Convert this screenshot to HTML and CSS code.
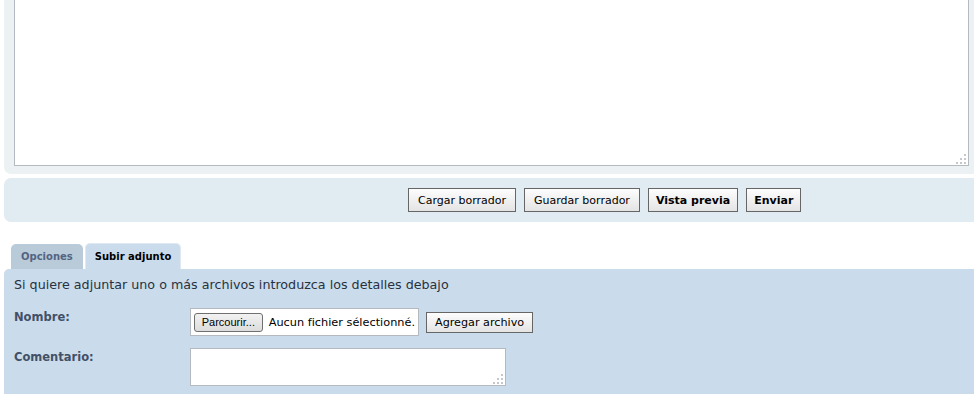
FILE: index.html
```html
<!DOCTYPE html>
<html lang="es">
<head>
    <meta charset="UTF-8">
    <meta name="viewport" content="width=device-width, initial-scale=1.0">
    <title>Publicar mensaje</title>
    <link rel="stylesheet" href="styles.css">
</head>
<body>
    <div class="page">
        <!-- Message editor -->
        <div class="panel editor">
            <div class="area-wrap">
                <textarea class="message" name="message"></textarea>
                <span class="grip">
                    <svg width="11" height="11" viewBox="0 0 11 11"><g fill="#c4c8cc"><rect x="8" y="0" width="2" height="2"/><rect x="4" y="4" width="2" height="2"/><rect x="8" y="4" width="2" height="2"/><rect x="0" y="8" width="2" height="2"/><rect x="4" y="8" width="2" height="2"/><rect x="8" y="8" width="2" height="2"/></g></svg>
                </span>
            </div>
        </div>

        <!-- Submit buttons -->
        <div class="panel actions">
            <button class="btn">Cargar borrador</button>
            <button class="btn">Guardar borrador</button>
            <button class="btn strong">Vista previa</button>
            <button class="btn strong">Enviar</button>
        </div>

        <!-- Options / attachments tabs -->
        <ul class="tabs">
            <li class="tab"><a href="#options">Opciones</a></li>
            <li class="tab active"><a href="#attach">Subir adjunto</a></li>
        </ul>
        <div class="panel attach">
            <p class="intro">Si quiere adjuntar uno o más archivos introduzca los detalles debajo</p>
            <dl class="row">
                <dt>Nombre:</dt>
                <dd class="file-row">
                    <div class="filebox">
                        <span class="browse">Parcourir...</span>
                        <span class="file-name">Aucun fichier sélectionné.</span>
                    </div>
                    <button class="btn add">Agregar archivo</button>
                </dd>
            </dl>
            <dl class="row">
                <dt>Comentario:</dt>
                <dd>
                    <div class="area-wrap">
                        <textarea class="comment" name="filecomment"></textarea>
                        <span class="grip">
                            <svg width="11" height="11" viewBox="0 0 11 11"><g fill="#c4c8cc"><rect x="8" y="0" width="2" height="2"/><rect x="4" y="4" width="2" height="2"/><rect x="8" y="4" width="2" height="2"/><rect x="0" y="8" width="2" height="2"/><rect x="4" y="8" width="2" height="2"/><rect x="8" y="8" width="2" height="2"/></g></svg>
                        </span>
                    </div>
                </dd>
            </dl>
        </div>
    </div>
</body>
</html>
```

FILE: styles.css
```css
html {
    overflow: hidden;
}

body {
    margin: 0;
    padding: 0;
    background-color: #fff;
    font-family: "DejaVu Sans", Verdana, sans-serif;
    font-size: 11px;
    color: #28313f;
}

.page {
    margin-left: 4px;
    width: 975px;
}

.panel {
    border-radius: 7px;
}

.editor {
    background-color: #ecf1f3;
    margin-top: -20px;
    padding: 0 10px 8px;
    border-radius: 0 0 7px 7px;
}

.area-wrap {
    position: relative;
}

textarea {
    display: block;
    box-sizing: border-box;
    border: 1px solid #b4bac0;
    background-color: #fff;
    resize: none;
    margin: 0;
    padding: 3px;
    font-family: inherit;
}

.message {
    width: 955px;
    height: 186px;
}

.grip {
    position: absolute;
    right: 3px;
    bottom: 2px;
    width: 10px;
    height: 10px;
    line-height: 0;
}

.actions {
    background-color: #e1ebf2;
    margin-top: 4px;
    height: 24px;
    padding: 10px 0 10px 404px;
    display: flex;
    gap: 8px;
}

.btn {
    height: 24px;
    padding: 1px 9px 0;
    border: 1px solid #666;
    background: linear-gradient(#fdfdfd, #e4e4e4);
    font-family: inherit;
    font-size: 11px;
    color: #000;
    cursor: pointer;
}

.btn.strong {
    padding: 1px 7px 0;
    font-weight: bold;
}

.tabs {
    list-style: none;
    margin: 21px 0 0;
    padding: 0 0 0 7px;
    display: flex;
    align-items: flex-end;
    gap: 2px;
}

.tab a {
    display: block;
    height: 25px;
    line-height: 25px;
    padding: 0 10px;
    background-color: #b9cad9;
    border-radius: 5px 5px 0 0;
    font-size: 10px;
    font-weight: bold;
    color: #536482;
    text-decoration: none;
}

.tab.active a {
    height: 25px;
    line-height: 25px;
    padding: 0 9px;
    background-color: #cadceb;
    border: 1px solid #e0e9f1;
    border-bottom: none;
    color: #000;
}

.attach {
    background-color: #cadceb;
    border-radius: 5px 0 0 0;
    padding: 7px 10px 8px;
}

.intro {
    margin: 0;
    line-height: 17px;
    font-size: 12.7px;
}

.row {
    display: flex;
    margin: 15px 0 0;
}

.row + .row {
    margin-top: 12px;
}

.row dt {
    width: 176px;
    padding-top: 2px;
    font-size: 11.5px;
    font-weight: bold;
    color: #425067;
}

.row dd {
    margin: 0;
}

.file-row {
    display: flex;
    align-items: center;
    gap: 7px;
}

.filebox {
    box-sizing: border-box;
    width: 229px;
    height: 28px;
    padding: 3px;
    border: 1px solid #b4bac0;
    background-color: #fff;
    display: flex;
    align-items: center;
    gap: 6px;
    white-space: nowrap;
}

.browse {
    box-sizing: border-box;
    height: 19px;
    width: 69px;
    line-height: 17px;
    text-align: center;
    border: 1px solid #707070;
    border-radius: 3px;
    background: linear-gradient(#f2f2f2, #dcdcdc);
    font-family: "Liberation Sans", Arial, sans-serif;
    font-size: 11px;
    color: #000;
}

.file-name {
    font-size: 11.3px;
    color: #000;
}

.btn.add {
    height: 21px;
    padding: 0 8px;
    font-size: 11.2px;
}

.comment {
    width: 316px;
    height: 38px;
}
```
